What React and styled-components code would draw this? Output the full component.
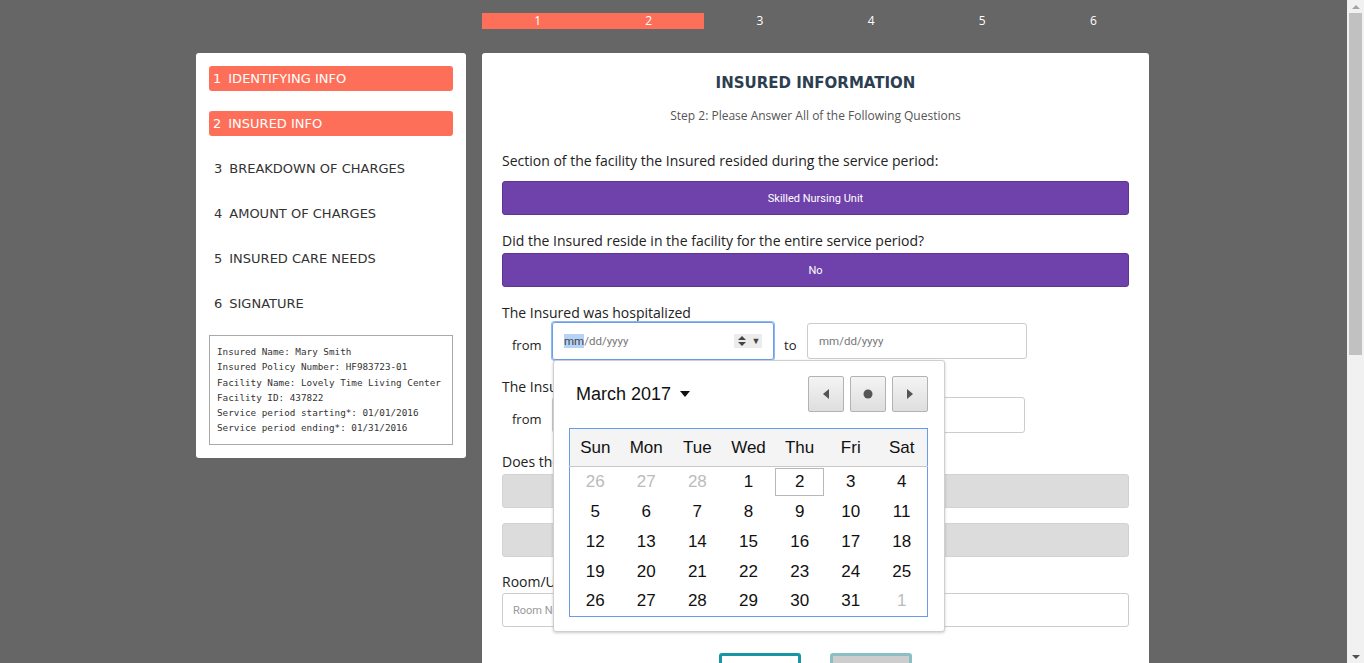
import React from "react";
import styled, { createGlobalStyle } from "styled-components";

const GlobalStyle = createGlobalStyle`
  html, body {
    margin: 0;
    padding: 0;
    background: #666666;
    overflow: hidden;
  }
  body {
    font-family: "Open Sans", "Lato", sans-serif;
  }
`;

const CORAL = "#fe6f5a";
const PURPLE = "#6f42ab";

const Frame = styled.div`
  display: flex;
  height: 100vh;
`;

const Viewport = styled.div`
  flex: 1;
  overflow: hidden;
  padding-right: 2px;
`;

const Scrollbar = styled.div`
  width: 17px;
  background: #f1f1f1;
  display: flex;
  flex-direction: column;
  align-items: center;
`;

const ScrollArrow = styled.div`
  height: 13px;
  display: flex;
  align-items: center;
  justify-content: center;
  margin-top: ${(p) => (p.$down ? "auto" : "0")};
`;

const ScrollThumb = styled.div`
  width: 13px;
  height: 342px;
  background: #c1c1c1;
`;

const Page = styled.div`
  width: 953px;
  margin: 0 auto;
  padding-top: 13px;
  display: grid;
  grid-template-columns: 270px 667px;
  column-gap: 16px;
  row-gap: 24px;
  align-items: start;
`;

const Progress = styled.div`
  grid-column: 2;
  grid-row: 1;
  display: grid;
  grid-template-columns: repeat(6, 1fr);
  height: 16px;
`;

const ProgressStep = styled.div`
  background: ${(p) => (p.$done ? CORAL : "transparent")};
  color: #fff;
  font-family: "Open Sans", sans-serif;
  font-size: 12px;
  line-height: 16px;
  text-align: center;
`;

const Sidebar = styled.aside`
  grid-column: 1;
  grid-row: 2;
  background: #fff;
  border-radius: 3px;
  padding: 13px 13px 13px;
`;

const NavList = styled.ul`
  list-style: none;
  margin: 0;
  padding: 0;
  display: flex;
  flex-direction: column;
  gap: 20px;
`;

const NavItem = styled.li`
  height: 25px;
  line-height: 26px;
  padding-left: ${(p) => (p.$active ? "4px" : "5px")};
  border-radius: 3px;
  background: ${(p) => (p.$active ? CORAL : "transparent")};
  color: ${(p) => (p.$active ? "#fff" : "#333")};
  font-family: "DejaVu Sans", sans-serif;
  font-size: 13px;
  text-transform: uppercase;
  white-space: nowrap;

  span {
    margin-right: 7px;
  }
`;

const InfoBox = styled.pre`
  margin: 19px 0 0;
  border: 1px solid #a9a9a9;
  padding: 8px 7px 8px;
  font-family: "DejaVu Sans Mono", monospace;
  font-size: 9.3px;
  line-height: 15.3px;
  color: #333;
`;

const Main = styled.main`
  grid-column: 2;
  grid-row: 2;
  background: #fff;
  border-radius: 3px 3px 0 0;
  padding: 20px 20px 560px;
`;

const Title = styled.h1`
  margin: 0;
  text-align: center;
  font-family: "DejaVu Sans", sans-serif;
  font-size: 15px;
  font-weight: 600;
  color: #2c3e50;
  line-height: 20px;
`;

const Subtitle = styled.p`
  margin: 14px 0 0;
  text-align: center;
  font-size: 12px;
  color: #555;
`;

const Question = styled.div`
  margin-top: ${(p) => p.$top || 16}px;
`;

const Label = styled.div`
  font-size: 14px;
  color: #222;
  line-height: 16px;
  margin-bottom: ${(p) => p.$gap || 10}px;
`;

const Choice = styled.button`
  display: block;
  width: 100%;
  height: 34px;
  margin-bottom: ${(p) => p.$gap || 0}px;
  border: 1px solid ${(p) => (p.$selected ? "#5e3596" : "#d2d2d2")};
  border-radius: 3px;
  background: ${(p) => (p.$selected ? PURPLE : "#dcdcdc")};
  color: ${(p) => (p.$selected ? "#fff" : "#444")};
  font-family: "Roboto", sans-serif;
  font-size: 11px;
  cursor: pointer;
`;

const DateRow = styled.div`
  display: flex;
  align-items: center;
  padding-left: 10px;
`;

const RowWord = styled.span`
  font-size: 13px;
  color: #222;
  width: ${(p) => p.$w}px;
  padding-top: 8px;
`;

const FieldWrap = styled.div`
  position: relative;
  margin-right: 10px;
`;

const DateField = styled.div`
  box-sizing: border-box;
  width: ${(p) => (p.$focus ? 222 : 220)}px;
  height: ${(p) => (p.$focus ? 38 : 36)}px;
  border: 1px solid ${(p) => (p.$focus ? "#6c9fe8" : "#ccc")};
  box-shadow: ${(p) => (p.$focus ? "0 0 0 1px #8fb6ee" : "none")};
  border-radius: 3px;
  display: flex;
  align-items: center;
  padding: 0 11px;
  font-family: "Roboto", sans-serif;
  font-size: 11.5px;
  color: #777;
`;

const Sel = styled.span`
  background: #b5d3f7;
  color: #444;
`;

const Spinners = styled.span`
  margin-left: auto;
  display: flex;
  align-items: center;
  background: #ececec;
  height: 14px;
  color: #444;

  b {
    width: 16px;
    display: flex;
    justify-content: center;
  }
  i {
    font-style: normal;
    width: 12px;
    text-align: center;
    font-size: 9px;
  }
`;

const TextInput = styled.div`
  box-sizing: border-box;
  height: 34px;
  border: 1px solid #ccc;
  border-radius: 3px;
  padding: 0 10px;
  display: flex;
  align-items: center;
  font-family: "Roboto", sans-serif;
  font-size: 11px;
  color: #999;
`;

const Actions = styled.div`
  display: flex;
  justify-content: center;
  gap: 29px;
  margin-top: 26px;
`;

const ActionButton = styled.button`
  width: 82px;
  height: 40px;
  border-radius: 3px;
  border: 3px solid ${(p) => (p.$primary ? "#1896a5" : "#8cbfc4")};
  background: ${(p) => (p.$primary ? "#fff" : "#cdcdcd")};
  font-size: 12px;
  color: #1896a5;
  padding-top: 20px;
`;

/* calendar popup */
const Popup = styled.div`
  position: absolute;
  left: 1px;
  top: 100%;
  width: 392px;
  height: 272px;
  box-sizing: border-box;
  background: #fff;
  border: 1px solid #cfcfcf;
  border-radius: 3px;
  box-shadow: 0 1px 3px rgba(0, 0, 0, 0.2);
  padding: 15px 16px 15px 15px;
  font-family: "Liberation Sans", Arial, sans-serif;
  z-index: 5;
`;

const CalHeader = styled.div`
  display: flex;
  align-items: center;
  height: 36px;
  margin-bottom: 16px;
`;

const MonthLabel = styled.div`
  font-size: 18px;
  color: #111;
  padding-left: 7px;
  display: flex;
  align-items: center;
  gap: 9px;
`;

const NavButtons = styled.div`
  margin-left: auto;
  display: flex;
  gap: 6px;
`;

const NavBtn = styled.div`
  width: 36px;
  height: 36px;
  box-sizing: border-box;
  border: 1px solid #b3b3b3;
  border-radius: 2px;
  background: linear-gradient(#f4f4f4, #dedede);
  display: flex;
  align-items: center;
  justify-content: center;
`;

const Grid = styled.table`
  width: 359px;
  border: 1px solid #6a9ae8;
  border-collapse: collapse;
  table-layout: fixed;

  th {
    height: 35px;
    background: #f4f4f4;
    border-bottom: 1px solid #c8c8c8;
    font-weight: normal;
    font-size: 17px;
    color: #111;
  }
  td {
    height: 30px;
    text-align: center;
    font-size: 17px;
    color: #111;
    padding: 0;
  }
`;

const Day = styled.td`
  && {
    color: ${(p) => (p.$muted ? "#bbb" : "#111")};
  }
  box-sizing: border-box;
  outline: ${(p) => (p.$today ? "1px solid #b8b8b8" : "none")};
  outline-offset: -2px;
`;

const weeks = [
  [[26, 1], [27, 1], [28, 1], [1], [2, 0, 1], [3], [4]],
  [[5], [6], [7], [8], [9], [10], [11]],
  [[12], [13], [14], [15], [16], [17], [18]],
  [[19], [20], [21], [22], [23], [24], [25]],
  [[26], [27], [28], [29], [30], [31], [1, 1]],
];

function Calendar() {
  return (
    <Popup>
      <CalHeader>
        <MonthLabel>
          March 2017
          <svg width="10" height="6" viewBox="0 0 10 6">
            <path d="M0 0h10L5 6z" fill="#111" />
          </svg>
        </MonthLabel>
        <NavButtons>
          <NavBtn>
            <svg width="6" height="10" viewBox="0 0 6 10">
              <path d="M6 0v10L0 5z" fill="#555" />
            </svg>
          </NavBtn>
          <NavBtn>
            <svg width="10" height="10" viewBox="0 0 10 10">
              <circle cx="5" cy="5" r="4.5" fill="#555" />
            </svg>
          </NavBtn>
          <NavBtn>
            <svg width="6" height="10" viewBox="0 0 6 10">
              <path d="M0 0v10l6-5z" fill="#555" />
            </svg>
          </NavBtn>
        </NavButtons>
      </CalHeader>
      <Grid>
        <thead>
          <tr>
            {["Sun", "Mon", "Tue", "Wed", "Thu", "Fri", "Sat"].map((d) => (
              <th key={d}>{d}</th>
            ))}
          </tr>
        </thead>
        <tbody>
          {weeks.map((w, i) => (
            <tr key={i}>
              {w.map(([n, muted, today], j) => (
                <Day key={j} $muted={!!muted} $today={!!today}>
                  {n}
                </Day>
              ))}
            </tr>
          ))}
        </tbody>
      </Grid>
    </Popup>
  );
}

const navItems = [
  "Identifying Info",
  "Insured Info",
  "Breakdown of Charges",
  "Amount of Charges",
  "Insured Care Needs",
  "Signature",
];

const info = `Insured Name: Mary Smith
Insured Policy Number: HF983723-01
Facility Name: Lovely Time Living Center
Facility ID: 437822
Service period starting*: 01/01/2016
Service period ending*: 01/31/2016`;

export default function App() {
  return (
    <>
      <GlobalStyle />
      <Frame>
        <Viewport>
          <Page>
            <Progress>
              {[1, 2, 3, 4, 5, 6].map((n) => (
                <ProgressStep key={n} $done={n <= 2}>
                  {n}
                </ProgressStep>
              ))}
            </Progress>
            <Sidebar>
              <NavList>
                {navItems.map((t, i) => (
                  <NavItem key={t} $active={i < 2}>
                    <span>{i + 1}</span>
                    {t}
                  </NavItem>
                ))}
              </NavList>
              <InfoBox>{info}</InfoBox>
            </Sidebar>
            <Main>
              <Title>INSURED INFORMATION</Title>
              <Subtitle>Step 2: Please Answer All of the Following Questions</Subtitle>

              <Question $top={29}>
                <Label $gap={12}>Section of the facility the Insured resided during the service period:</Label>
                <Choice $selected>Skilled Nursing Unit</Choice>
              </Question>

              <Question $top={18}>
                <Label $gap={4}>Did the Insured reside in the facility for the entire service period?</Label>
                <Choice $selected>No</Choice>
              </Question>

              <Question $top={18}>
                <Label $gap={1}>The Insured was hospitalized</Label>
                <DateRow>
                  <RowWord $w={40}>from</RowWord>
                  <FieldWrap>
                    <DateField $focus>
                      <Sel>mm</Sel>/dd/yyyy
                      <Spinners>
                        <b>
                          <svg width="8" height="10" viewBox="0 0 8 10">
                            <path d="M0 4L4 0l4 4zM0 6h8L4 10z" fill="#444" />
                          </svg>
                        </b>
                        <i>▼</i>
                      </Spinners>
                    </DateField>
                    <Calendar />
                  </FieldWrap>
                  <RowWord $w={23}>to</RowWord>
                  <FieldWrap>
                    <DateField>mm/dd/yyyy</DateField>
                  </FieldWrap>
                </DateRow>
              </Question>

              <Question $top={19}>
                <Label $gap={2}>The Insured was discharged from the facility</Label>
                <DateRow>
                  <RowWord $w={40}>from</RowWord>
                  <FieldWrap>
                    <DateField>mm/dd/yyyy</DateField>
                  </FieldWrap>
                  <RowWord $w={23}>to</RowWord>
                  <FieldWrap>
                    <DateField>mm/dd/yyyy</DateField>
                  </FieldWrap>
                </DateRow>
              </Question>

              <Question $top={21}>
                <Label $gap={4}>Does the Insured have a private room?</Label>
                <Choice $gap={15}>Yes</Choice>
                <Choice>No</Choice>
              </Question>

              <Question $top={17}>
                <Label $gap={3}>Room/Unit Number</Label>
                <TextInput>Room Number</TextInput>
              </Question>

              <Actions>
                <ActionButton $primary>BACK</ActionButton>
                <ActionButton>NEXT</ActionButton>
              </Actions>
            </Main>
          </Page>
        </Viewport>
        <Scrollbar>
          <ScrollArrow>
            <svg width="8" height="4" viewBox="0 0 8 4">
              <path d="M0 4L4 0l4 4z" fill="#a3a3a3" />
            </svg>
          </ScrollArrow>
          <ScrollThumb />
          <ScrollArrow $down>
            <svg width="8" height="4" viewBox="0 0 8 4">
              <path d="M0 0h8L4 4z" fill="#505050" />
            </svg>
          </ScrollArrow>
        </Scrollbar>
      </Frame>
    </>
  );
}
